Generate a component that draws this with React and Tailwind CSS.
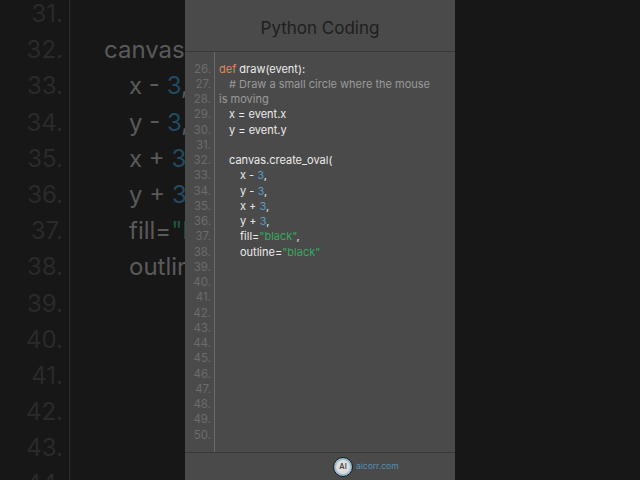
const font = { fontFamily: 'Inter, "Noto Sans", sans-serif' };

const Num = ({ c }) => <span className="text-[#5b9bc4]">{c}</span>;
const Str = ({ c }) => <span className="text-[#35a862]">{c}</span>;

const lines = [
  [26, 0, <><span className="text-[#d98a5f]">def</span> draw(event):</>],
  [27, 1, <span className="text-[#9a9a9a]"># Draw a small circle where the mouse</span>],
  [28, 0, <span className="text-[#9a9a9a]">is moving</span>],
  [29, 1, "x = event.x"],
  [30, 1, "y = event.y"],
  [31, 0, ""],
  [32, 1, "canvas.create_oval("],
  [33, 2, <>x - <Num c="3" />,</>],
  [34, 2, <>y - <Num c="3" />,</>],
  [35, 2, <>x + <Num c="3" />,</>],
  [36, 2, <>y + <Num c="3" />,</>],
  [37, 2, <>fill=<Str c={'"black"'} />,</>],
  [38, 2, <>outline=<Str c={'"black"'} /></>],
];
for (let n = 39; n <= 50; n++) lines.push([n, 0, ""]);

const indentClass = ["pl-0", "pl-[10px]", "pl-[21px]"];

const bgLines = [
  [31, 0, ""],
  [32, 1, "canvas.create_oval("],
  [33, 2, <>x - <span className="text-[#234a60]">3</span>,</>],
  [34, 2, <>y - <span className="text-[#234a60]">3</span>,</>],
  [35, 2, <>x + <span className="text-[#234a60]">3</span>,</>],
  [36, 2, <>y + <span className="text-[#234a60]">3</span>,</>],
  [37, 2, <>fill=<span className="text-[#1f5a36]">"black"</span>,</>],
  [38, 2, <>outline=<span className="text-[#1f5a36]">"black"</span></>],
  [39, 0, ""], [40, 0, ""], [41, 0, ""], [42, 0, ""], [43, 0, ""], [44, 0, ""],
];
const bgIndent = ["pl-0", "pl-[34px]", "pl-[59px]"];

export default function App() {
  return (
    <div className="flex w-[640px] h-[480px] overflow-hidden bg-[#171717]" style={font}>
      <div className="w-[185px] h-full overflow-hidden shrink-0">
        <div className="-mt-[4px]">
          {bgLines.map(([n, ind, c]) => (
            <div key={n} className="flex h-[36.2px] leading-[36.2px] text-[24px] whitespace-nowrap">
              <div className="w-[70px] shrink-0 h-full pr-[6px] text-right text-[#2a2a2a] border-r border-[#2c2c2c]">{n}.</div>
              <div className={`text-[#5a5a5a] ${bgIndent[ind]}`}>{c}</div>
            </div>
          ))}
        </div>
      </div>

      <div className="w-[270px] h-full shrink-0 flex flex-col bg-[#4a4a4a]">
        <div className="h-[52px] shrink-0 flex items-center justify-center pt-[6px] border-b border-[#3a3a3a] text-[17px] text-[#1e1e1e]">
          Python Coding
        </div>
        <div className="flex-1 flex min-h-0">
          <div className="w-[30px] shrink-0 border-r border-[#6a6a6a] pt-[9.5px] pr-[3px]">
            {lines.map(([n]) => (
              <div key={n} className="h-[15.25px] leading-[15.25px] text-[11.5px] text-right text-[#6c6c6c]">{n}.</div>
            ))}
          </div>
          <div className="flex-1 pt-[9.5px] pl-[4px]">
            {lines.map(([n, ind, c]) => (
              <div key={n} className={`h-[15.25px] leading-[15.25px] text-[11px] whitespace-nowrap text-[#ececec] ${indentClass[ind]}`}>{c}</div>
            ))}
          </div>
        </div>
        <div className="h-[28px] shrink-0 border-t border-[#3a3a3a] flex items-center pl-[148px] gap-[3px]">
          <div className="w-[20px] h-[20px] rounded-full bg-[#9fbccd] border-[1.5px] border-[#111a22] flex items-center justify-center">
            <div className="w-[14px] h-[14px] rounded-full bg-[#dedede] flex items-center justify-center text-[7.5px] font-medium text-[#333]">AI</div>
          </div>
          <span className="text-[8.5px] text-[#5290b5]">aicorr.com</span>
        </div>
      </div>

      <div className="flex-1 h-full" />
    </div>
  );
}
